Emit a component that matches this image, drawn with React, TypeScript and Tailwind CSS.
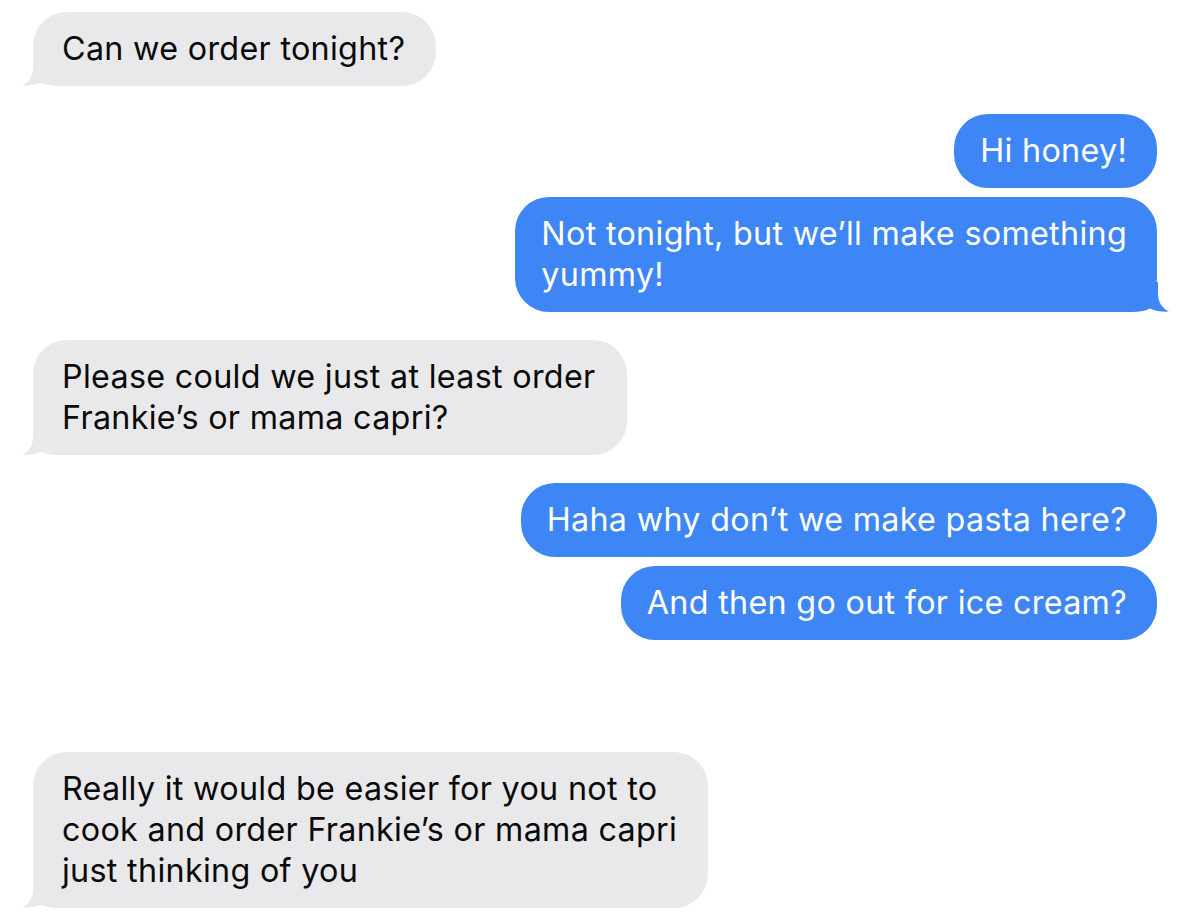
import React from "react";

type Msg = {
  me: boolean;
  lines: string[];
  tail: boolean;
  gap: string;
};

const messages: Msg[] = [
  { me: false, lines: ["Can we order tonight?"], tail: true, gap: "mt-0" },
  { me: true, lines: ["Hi honey!"], tail: false, gap: "mt-[28px]" },
  { me: true, lines: ["Not tonight, but we’ll make something", "yummy!"], tail: true, gap: "mt-[9px]" },
  { me: false, lines: ["Please could we just at least order", "Frankie’s or mama capri?"], tail: true, gap: "mt-[28px]" },
  { me: true, lines: ["Haha why don’t we make pasta here?"], tail: false, gap: "mt-[28px]" },
  { me: true, lines: ["And then go out for ice cream?"], tail: false, gap: "mt-[9px]" },
  {
    me: false,
    lines: ["Really it would be easier for you not to", "cook and order Frankie’s or mama capri", "just thinking of you"],
    tail: true,
    gap: "mt-[112px]",
  },
];

function Tail({ me }: { me: boolean }) {
  if (me) {
    return (
      <svg
        className="absolute bottom-0 right-[-13px] w-[46px] h-[30px]"
        viewBox="0 0 46 30"
        fill="#3e86f5"
      >
        <path d="M34 0 L34 12 C34 20 38 26 45 29.6 C39 30.2 32 29 26 26.5 C22 28.5 16 30 8 30 L0 30 L0 0 Z" />
      </svg>
    );
  }
  return (
    <svg
      className="absolute bottom-0 left-[-12px] w-[46px] h-[30px]"
      viewBox="0 0 46 30"
      fill="#e9e9eb"
    >
      <path d="M12 0 L12 12 C12 20 8 26 1 29.6 C7 30.2 14 29 20 26.5 C24 28.5 30 30 38 30 L46 30 L46 0 Z" />
    </svg>
  );
}

function Bubble({ m }: { m: Msg }) {
  return (
    <div className={`flex ${m.me ? "justify-end" : "justify-start"} ${m.gap}`}>
      <div
        className={`relative rounded-[34px] pt-4 pb-[17px] whitespace-nowrap text-[32.3px] leading-[41px] tracking-[0.3px] ${
          m.me ? "bg-[#3e86f5] text-white pl-[26px] pr-[30px]" : "bg-[#e9e9eb] text-[#0a0a0a] pl-[29px] pr-[31px]"
        }`}
      >
        {m.tail && <Tail me={m.me} />}
        <div className="relative">
          {m.lines.map((l, i) => (
            <div key={i}>{l}</div>
          ))}
        </div>
      </div>
    </div>
  );
}

export default function App() {
  return (
    <div
      className="w-[1180px] h-[914px] bg-white overflow-hidden pt-[12px] pl-[33px] pr-[23px] flex flex-col"
      style={{ fontFamily: "Inter, 'Noto Sans', sans-serif" }}
    >
      {messages.map((m, i) => (
        <Bubble key={i} m={m} />
      ))}
    </div>
  );
}
